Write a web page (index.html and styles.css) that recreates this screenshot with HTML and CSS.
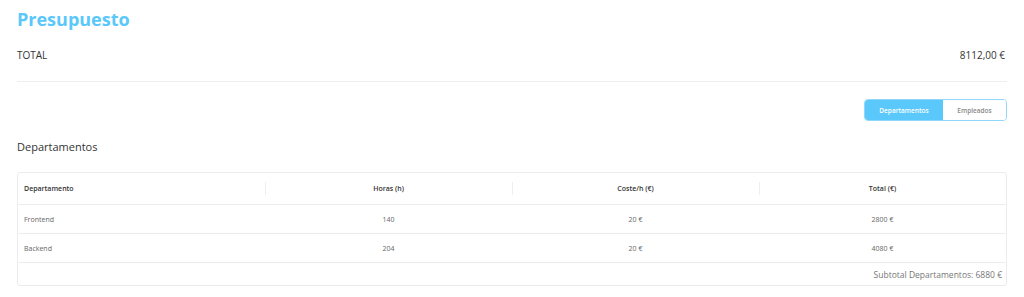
FILE: index.html
```html
<!DOCTYPE html>
<html lang="es">
<head>
    <meta charset="UTF-8">
    <meta name="viewport" content="width=device-width, initial-scale=1.0">
    <title>Presupuesto</title>
    <link rel="stylesheet" href="styles.css">
</head>
<body>
    <div class="page">
        <h1 class="page-title">Presupuesto</h1>

        <!-- Total general -->
        <div class="total-row">
            <span class="total-label">TOTAL</span>
            <span class="total-value">8112,00 €</span>
        </div>

        <!-- Selector de vista -->
        <div class="toggle-row">
            <div class="toggle">
                <button class="toggle-btn active">Departamentos</button>
                <button class="toggle-btn">Empleados</button>
            </div>
        </div>

        <h2 class="section-title">Departamentos</h2>

        <table class="budget-table">
            <thead>
                <tr>
                    <th class="left">Departamento</th>
                    <th>Horas (h)</th>
                    <th>Coste/h (€)</th>
                    <th>Total (€)</th>
                </tr>
            </thead>
            <tbody>
                <tr>
                    <td class="left">Frontend</td>
                    <td>140</td>
                    <td>20 €</td>
                    <td>2800 €</td>
                </tr>
                <tr>
                    <td class="left">Backend</td>
                    <td>204</td>
                    <td>20 €</td>
                    <td>4080 €</td>
                </tr>
                <tr class="subtotal-row">
                    <td colspan="4">Subtotal Departamentos: 6880 €</td>
                </tr>
            </tbody>
        </table>
    </div>
</body>
</html>
```

FILE: styles.css
```css
:root {
    --primary-color: #5ac8fa;
    --text-color: #333;
    --muted-color: #666;
    --border-color: #ececec;
}

body, html {
    margin: 0;
    padding: 0;
    background-color: #fff;
    color: var(--text-color);
    font-family: "Open Sans", Arial, sans-serif;
}

.page {
    padding: 8px 17px;
}

/* Título */
.page-title {
    margin: 0;
    font-size: 18px;
    line-height: 22px;
    font-weight: 700;
    color: var(--primary-color);
}

/* Total */
.total-row {
    display: flex;
    justify-content: space-between;
    align-items: center;
    margin-top: 14px;
    height: 22px;
    padding: 0 2px 15px 0;
    border-bottom: 1px solid #eee;
    font-size: 10px;
}

/* Toggle */
.toggle-row {
    display: flex;
    justify-content: flex-end;
    margin-top: 17px;
}

.toggle {
    display: flex;
    height: 22px;
    box-sizing: border-box;
    border: 1px solid #8fd8fb;
    border-radius: 4px;
    overflow: hidden;
}

.toggle-btn {
    border: none;
    background: #fff;
    color: #888;
    font-family: "Open Sans", Arial, sans-serif;
    font-size: 6.5px;
    font-weight: 600;
    padding: 0;
    cursor: pointer;
    width: 63px;
}

.toggle-btn.active {
    background-color: var(--primary-color);
    color: #fff;
    width: 78px;
}

/* Sección */
.section-title {
    margin: 18px 0 0;
    font-size: 11px;
    line-height: 16px;
    font-weight: 400;
}

/* Tabla */
.budget-table {
    width: 100%;
    margin-top: 17px;
    border-spacing: 0;
    table-layout: fixed;
    border: 1px solid var(--border-color);
    border-radius: 3px;
    font-size: 7px;
}

.budget-table th,
.budget-table td {
    text-align: center;
    padding: 0 6px;
    border-bottom: 1px solid var(--border-color);
}

.budget-table th {
    position: relative;
    height: 31px;
    font-weight: 600;
    color: var(--text-color);
}

.budget-table th + th::before {
    content: '';
    position: absolute;
    left: 0;
    top: 9px;
    height: 13px;
    border-left: 1px solid #eee;
}

.budget-table td {
    height: 28px;
    color: var(--muted-color);
}

.budget-table .left {
    text-align: left;
}

.budget-table .subtotal-row td {
    height: 22px;
    text-align: right;
    padding-right: 4px;
    border-bottom: none;
    font-size: 8.5px;
    color: #777;
}
```
